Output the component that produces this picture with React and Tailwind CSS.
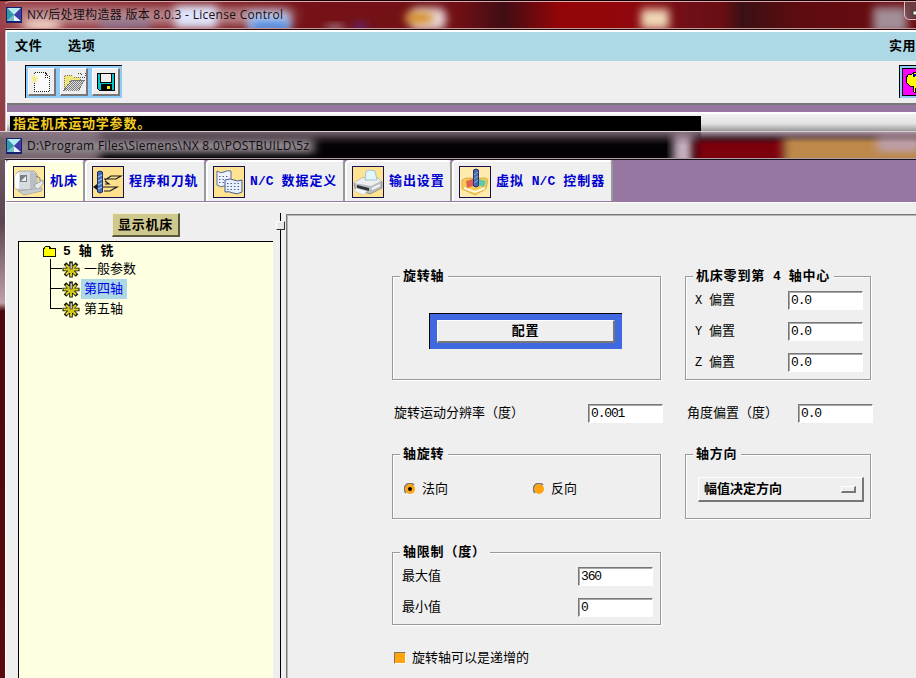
import React from "react";

const MONO = "font-['Liberation_Mono','Noto_Sans_CJK_SC',monospace]";
const UI = "font-['Open_Sans','Noto_Sans_CJK_SC',sans-serif]";

function AppIcon() {
  return (
    <svg width="16" height="16" viewBox="0 0 16 16" className="shrink-0">
      <rect width="16" height="16" fill="#15206e" />
      <rect x="1" y="1" width="14" height="13" fill="#4c5fc4" />
      <path d="M1 1 L15 1 L8 8 Z" fill="#b4ecf2" />
      <path d="M1 1 L8 8 L1 14 Z" fill="#2f9aa5" />
      <path d="M8 8 L15 14 L1 14 Z" fill="#e9f6ff" />
      <path d="M1 14 L8 8 L8 14 Z" fill="#78b9ce" />
      <path d="M15 1 L15 14 L8 8 Z" fill="#413ca4" />
    </svg>
  );
}

function TopGlass() {
  return (
    <svg width="916" height="32" viewBox="0 0 916 32" className="absolute left-0 top-0">
      <defs>
        <filter id="ga" x="-30%" y="-60%" width="160%" height="220%"><feGaussianBlur stdDeviation="4" /></filter>
        <filter id="gb" x="-30%" y="-60%" width="160%" height="220%"><feGaussianBlur stdDeviation="9 4" /></filter>
        <linearGradient id="base">
          <stop offset="0" stopColor="#9b3f48" />
          <stop offset=".3" stopColor="#761318" />
          <stop offset=".5" stopColor="#711015" />
          <stop offset=".55" stopColor="#410d14" />
          <stop offset=".61" stopColor="#930508" />
          <stop offset=".68" stopColor="#92070c" />
          <stop offset=".75" stopColor="#710f18" />
          <stop offset=".79" stopColor="#690e13" />
          <stop offset=".81" stopColor="#3a1014" />
          <stop offset=".87" stopColor="#5d0c10" />
          <stop offset="1" stopColor="#6c0c10" />
        </linearGradient>
      </defs>
      <rect width="916" height="32" fill="url(#base)" />
      <rect x="15" y="7" width="275" height="18" fill="#c09296" opacity=".85" filter="url(#gb)" />
      <ellipse cx="42" cy="25" rx="20" ry="6" fill="#f5d8c8" filter="url(#ga)" />
      <rect x="100" y="20" width="50" height="9" fill="#8186ad" opacity=".7" filter="url(#ga)" />
      <rect x="175" y="6" width="42" height="22" fill="#dfe4fa" filter="url(#ga)" />
      <rect x="248" y="12" width="42" height="20" fill="#b2cbf5" filter="url(#ga)" />
      <rect x="252" y="22" width="36" height="9" fill="#427bd7" filter="url(#ga)" />
      <ellipse cx="335" cy="28" rx="10" ry="3" fill="#a994a4" filter="url(#ga)" />
      <ellipse cx="360" cy="27" rx="9" ry="4" fill="#622874" filter="url(#ga)" />
      <rect x="410" y="8" width="36" height="22" rx="8" fill="#ead7da" filter="url(#ga)" />
      <ellipse cx="419" cy="18" rx="15" ry="6" fill="#d48c22" filter="url(#ga)" />
      <rect x="641" y="9" width="28" height="20" fill="#f0d6b6" filter="url(#ga)" />
      <rect x="873" y="7" width="34" height="26" fill="#a28e98" filter="url(#ga)" />
      <path d="M5 3.5 Q8 1.5 12 1.5 H916" stroke="#d9a8ab" fill="none" />
      <path d="M0 0 H916" stroke="#170003" strokeWidth="2" />
      <path d="M5 28.5 H916" stroke="#c4989b" />
      <path d="M5 29.5 H916" stroke="#260b0d" />
      <path d="M904.5 2 V14 Q904.5 19.5 910 19.5 H916" stroke="#d7c5ca" fill="none" />
      <path d="M905.5 2 V13 Q905.5 18.5 911 18.5 H916 V2 Z" fill="#6c5053" opacity=".7" />
      <rect x="913" y="11" width="6" height="4" fill="#fff" stroke="#443" />
    </svg>
  );
}

function SecondGlass() {
  return (
    <svg width="916" height="29" viewBox="0 0 916 29" className="absolute left-0 top-0">
      <defs>
        <filter id="gc" x="-30%" y="-60%" width="160%" height="220%"><feGaussianBlur stdDeviation="5 3" /></filter>
        <linearGradient id="sheen" x1="0" x2="0" y1="0" y2="1">
          <stop offset="0" stopColor="#bda6b4" />
          <stop offset=".25" stopColor="#907688" stopOpacity=".75" />
          <stop offset=".65" stopColor="#4a3844" stopOpacity="0" />
        </linearGradient>
      </defs>
      <rect width="916" height="29" fill="#040204" />
      <rect x="-10" y="0" width="110" height="40" fill="#75636c" filter="url(#gc)" />
      <rect x="10" y="7" width="304" height="15" fill="#8c848a" filter="url(#gc)" />
      <rect x="673" y="3" width="20" height="30" fill="#c8b0c1" filter="url(#gc)" />
      <rect x="695" y="8" width="92" height="26" fill="#7d060e" filter="url(#gc)" />
      <rect x="783" y="5" width="150" height="28" fill="#bd8848" filter="url(#gc)" />
      <rect x="877" y="3" width="44" height="18" fill="#bd9da5" filter="url(#gc)" />
      <rect width="701" height="22" fill="url(#sheen)" opacity=".65" />
      <rect x="701" width="215" height="18" fill="url(#sheen)" />
      <path d="M0 .5 H916" stroke="#d8ccd2" />
      <path d="M5 27.5 H916" stroke="#b39fa9" />
      <path d="M5 28.5 H916" stroke="#171017" />
    </svg>
  );
}

function NewIcon() {
  return (
    <svg width="22" height="24" viewBox="0 0 22 24" shapeRendering="crispEdges">
      <path d="M3.500 2.500 H14 L18.500 7 V21.500 H3.500 Z" fill="#fafafa" stroke="#222" strokeDasharray="1 1" />
      <path d="M14.500 3 V7.500 H18" fill="none" stroke="#222" strokeDasharray="1 1" />
      <path d="M0 8.500 H7 M3.500 5 V13 M1 6 L6 12 M6 6 L1 12" stroke="#f3ea72" />
    </svg>
  );
}
function OpenIcon() {
  return (
    <svg width="24" height="24" viewBox="0 0 24 24" shapeRendering="crispEdges">
      <defs>
        <pattern id="dither" width="2" height="2" patternUnits="userSpaceOnUse">
          <rect width="2" height="2" fill="#e0e0e0" />
          <rect width="1" height="1" fill="#777" /><rect x="1" y="1" width="1" height="1" fill="#777" />
        </pattern>
      </defs>
      <path d="M2 7 L4 5 H9 L11 7 H18 V19 H2 Z" fill="#f0e77c" stroke="#777" strokeDasharray="1 1" />
      <path d="M2 20 L9 10 H23 L17 20 Z" fill="url(#dither)" stroke="#777" strokeDasharray="1 1" />
      <path d="M16 3 L18 3 L21 6 M23 3 V7 H19" fill="none" stroke="#444" strokeDasharray="1 1" />
    </svg>
  );
}
function SaveIcon() {
  return (
    <svg width="18" height="18" viewBox="0 0 18 18" shapeRendering="crispEdges">
      <path d="M0 0 H18 V18 H2 L0 16 Z" fill="#000" />
      <path d="M1 1 H17 V17 H2 L1 16 Z" fill="#08c5cb" />
      <rect x="3" y="0" width="12" height="10" fill="#000" />
      <rect x="4" y="1" width="10" height="8" fill="#efefef" />
      <rect x="4" y="11" width="11" height="7" fill="#000" />
      <rect x="10" y="13" width="3" height="3" fill="#e8f000" />
    </svg>
  );
}
function ToolButton({ children }) {
  return (
    <div className="flex size-7 items-center justify-center border-t border-r-2 border-b-2 border-l border-t-white border-l-white border-r-[#777] border-b-[#777] bg-[#efefef]">
      {children}
    </div>
  );
}

const MachineIcon = () => (
  <svg width="30" height="30" viewBox="0 0 30 30">
    <rect width="30" height="30" fill="#ffe89a" />
    <path d="M1 8 L5 4 H20 L23 7 V20 L20 23 H4 L1 21 Z" fill="#d8dcdf" stroke="#8c9298" strokeWidth=".7" />
    <path d="M1 8 L5 5 V22 L1 21 Z" fill="#fff" />
    <path d="M16 5 L22 6 V20 L16 23 Z" fill="#bbbfc3" />
    <rect x="6" y="8" width="7" height="7" fill="#777e84" /><path d="M7 14 L12 9 V14 Z" fill="#edf1f2" />
    <path d="M20 18 L29 13 V17 L23 24 Z" fill="#e8ebed" stroke="#7f858b" strokeWidth=".7" />
    <path d="M4 24 L28 21 V24 L10 28 Z" fill="#c9cdd0" stroke="#92979d" strokeWidth=".6" />
    <path d="M22 9 L26 11 V14" stroke="#777" fill="none" />
  </svg>
);
const ToolpathIcon = () => (
  <svg width="30" height="30" viewBox="0 0 30 30">
    <rect width="30" height="30" fill="#ffe08c" />
    <path d="M4.500 5 Q7 3 9.500 5 V25 Q7 27 4.500 25 Z" fill="#426abd" stroke="#1f2e65" />
    <path d="M5 10 L9 8 M5 14 L9 12 M5 18 L9 16 M5 22 L9 20" stroke="#9bc4ef" strokeWidth="1.200" />
    <path d="M11 12 H23 L28 9 H18 L12 13 M1 20 H5 M10 20 H24 L17 24 H11 M12 14 L16 17 H12" stroke="#171a20" strokeWidth="1.200" fill="none" />
    <path d="M0 20 L4 17 V23 Z" fill="#14171c" />
  </svg>
);
const DataIcon = () => (
  <svg width="30" height="30" viewBox="0 0 30 30">
    <rect width="30" height="30" fill="#ffe391" />
    <path d="M3 4 Q7 7 10 5 T17 4 V19 Q13 17 10 19 T3 18 Z" fill="#edf3ff" stroke="#576da0" />
    <path d="M11 13 Q17 11 20 13 T28 13 V25 Q23 28 19 26 T11 25 Z" fill="#e8effc" stroke="#455c93" />
    <path d="M5 9.500 H14 M5 12.500 H10 M5 15.500 H10 M13 16.500 H26 M13 19.500 H26 M13 22.500 H26" stroke="#4b6398" strokeDasharray="1.500 2" />
  </svg>
);
const PrinterIcon = () => (
  <svg width="30" height="30" viewBox="0 0 30 30">
    <rect width="30" height="30" fill="#ffe391" />
    <path d="M1 16 L9 11 L25 11 L29 15 V21 L17 27 L2 22 Z" fill="#b9bdc2" stroke="#6b7176" strokeWidth=".6" />
    <path d="M1 16 L9 11 H25 L28 14 L18 19 Z" fill="#eceef0" />
    <path d="M12 13 L13 4 Q17 2 22 4 L24 13 Z" fill="#e2f6fd" stroke="#8cb1c1" strokeWidth=".7" />
    <path d="M4 18 L16 21 V24 L4 21 Z" fill="#2d3337" />
    <path d="M3 21 L14 24 L11 28 L1 24 Z" fill="#f5f7f8" stroke="#aaa" strokeWidth=".4" />
    <path d="M19 22 L27 18" stroke="#f3f4f4" strokeWidth="2" />
  </svg>
);
const ControllerIcon = () => (
  <svg width="30" height="30" viewBox="0 0 30 30">
    <rect width="30" height="30" fill="#ffebae" />
    <path d="M2 13 L6 11 H26 L28 13 L26 22 L15 28 L2 22 Z" fill="#f5cc55" stroke="#c89629" strokeWidth=".6" />
    <path d="M6 14 L13 12 V19 L7 21 Z" fill="#e35f50" />
    <path d="M18 12 L26 14 L24 20 L18 18 Z" fill="#5fc7ae" />
    <path d="M4 21 L15 25 L25 21" stroke="#fff7df" strokeWidth="2" fill="none" />
    <path d="M13.500 3 Q16 1 18.500 3 V19 Q16 21 13.500 19 Z" fill="#4966b4" stroke="#25386e" />
    <path d="M14 8 L18 5 M14 12 L18 9 M14 16 L18 13" stroke="#8db2df" />
  </svg>
);

function Tab({ icon, children, width, active }) {
  return (
    <div className={`flex h-[41px] shrink-0 items-center rounded-t-[4px] border-t-2 border-t-white border-l-2 border-l-white border-r-2 border-r-[#999] pl-[5px] ${active ? "bg-[#ffffe2]" : "bg-[#efefef]"} ${width}`}>
      <div className="mr-[5px] size-8 shrink-0 border border-[#15124b]">{icon}</div>
      <div className={`pt-px text-[13px] font-bold tracking-[0.9px] whitespace-pre text-[#0000ce] ${MONO}`}>{children}</div>
    </div>
  );
}

const L = ({ children }) => <span className="tracking-[0.1px]">{children}</span>;

function Gear() {
  return (
    <svg width="18" height="17" viewBox="0 0 18 17" className="shrink-0">
      <path d="M9 0.500 V16.500 M0.500 8.500 H17.500 M3 2.500 L15 14.500 M15 2.500 L3 14.500" stroke="#151500" strokeWidth="3.600" />
      <path d="M9 2 V15.500 M1.500 8.500 H16.500 M4 4 L14 13.500 M14 4 L4 13.500" stroke="#ddd324" strokeWidth="1.900" />
      <circle cx="9" cy="8.500" r="3.500" fill="#d5ca1c" />
      <rect x="8" y="2" width="2.500" height="6" fill="#bbb" stroke="#222" strokeWidth=".6" />
    </svg>
  );
}

function TreeItem({ children, selected, last }) {
  return (
    <div className="flex h-5 items-center">
      <svg width="12" height="20" className="shrink-0" shapeRendering="crispEdges">
        <path d={last ? "M.5 0 V9.500 H12" : "M.5 0 V20 M.5 9.500 H12"} stroke="#000" fill="none" />
      </svg>
      <Gear />
      <span className={`ml-px flex h-5 items-center pt-[2px] pr-[4px] pl-[3px] text-[13px] ${selected ? "bg-[#add8e6] text-[#0000e8]" : "text-black"}`}>{children}</span>
    </div>
  );
}

function Group({ title, className, children }) {
  return (
    <section className={`flex flex-col border border-[#999] shadow-[1px_1px_0_#fff,inset_1px_1px_0_#fff] ${className}`}>
      <h2 className="-mt-[11px] ml-[7px] h-[21px] self-start bg-[#efefef] pr-[4px] pl-[3px] text-[13px] leading-[22px] font-bold tracking-[0.8px] whitespace-pre">{title}</h2>
      {children}
    </section>
  );
}

function Field({ value }) {
  return (
    <div className="flex h-[19px] w-[75px] shrink-0 items-center border border-t-[#777] border-r-white border-b-white border-l-[#777] bg-white pl-[2px] text-[13px] tracking-[-1.15px] shadow-[inset_1px_1px_0_#a8a8a8]">
      {value}
    </div>
  );
}

function Radio({ checked }) {
  return (
    <svg width="12" height="12" viewBox="0 0 12 12">
      <circle cx="6" cy="6" r="5" fill="#ffa510" />
      <path d="M2 10 A5 5 0 0 1 10 2" fill="none" stroke="#807567" strokeWidth="1.500" />
      {checked && <circle cx="6" cy="6" r="2" fill="#000" />}
    </svg>
  );
}

function MainWindow() {
  return (
    <div className="absolute top-0 left-0 h-[132px] w-[916px] overflow-hidden bg-[#903f46]">
      <TopGlass />
      <header className={`relative flex h-[30px] items-center gap-[5px] pl-[6px] text-[12px] text-[#170f12] ${UI}`}>
        <AppIcon />
        <span className="tracking-[0.29px] whitespace-pre">NX/后处理构造器 版本 8.0.3 - License Control</span>
      </header>
      <div className="relative ml-[5px] border-l border-[#d9bfc1]">
        <div className="h-[104px] border-t-2 border-l border-white bg-[#efefef]">
          <nav className="flex h-[29px] items-center bg-[#add8e6] pt-px pl-[8px] text-[13px] font-bold tracking-[0.8px]">
            <span className="w-[53px]">文件</span>
            <span>选项</span>
            <span className="ml-auto tracking-[0.5px]">实用</span>
          </nav>
          <div className="flex h-[44px] justify-between border-b-2 border-[#777] pt-1 pl-[18px]">
            <div className="flex h-[33px] w-[97px] gap-1 border-t border-l border-black bg-[#8fcdf8] pt-[2px] pl-[2px]">
              <ToolButton><NewIcon /></ToolButton>
              <ToolButton><OpenIcon /></ToolButton>
              <ToolButton><SaveIcon /></ToolButton>
            </div>
            <div className="h-[33px] w-[17px] overflow-hidden border-t border-l border-black bg-[#8fcdf8] pt-[2px] pl-[2px]">
              <svg width="28" height="28" viewBox="0 0 28 28" shapeRendering="crispEdges">
                <rect width="28" height="28" fill="#000" /><rect x="1" y="1" width="27" height="26" fill="#f0f" />
                <path d="M4 10 L7 6 H10 L13 4 H22 V20 H13 V24 H12 L11 18 H8 L4 14 Z" fill="#ff0" stroke="#000" />
                <path d="M12 9 V7 H15" stroke="#0000bd" strokeWidth="2" fill="none" />
              </svg>
            </div>
          </div>
          <div className="h-[7px] bg-[#9776a2]" />
          <div className="h-[21px] border-t-2 border-white bg-linear-to-b from-[#f2f2f2] via-[#e3e3e3] to-[#888] pt-[2px] pl-[3px]">
            <div className="flex h-[17px] w-[691px] items-center bg-black pl-[3px] text-[13px] font-bold tracking-[0.8px] text-[#f2cc24]">指定机床运动学参数。</div>
          </div>
        </div>
      </div>
    </div>
  );
}

function TreePane() {
  return (
    <aside className="flex w-[274px] shrink-0 flex-col pt-[10px]">
      <button className="ml-[106px] flex h-6 w-[68px] items-center justify-center border border-t-[#f1edcf] border-r-2 border-b-2 border-l-[#f1edcf] border-r-[#5b573f] border-b-[#5b573f] bg-[#d0c98e] pt-[2px] text-[13px] font-bold tracking-[0.8px]">显示机床</button>
      <div className="mt-[4px] mr-[7px] ml-[12px] flex-1 border-t border-l border-black bg-[#ffffe1] pl-[24px]">
        <div className="flex h-[18px] items-center pt-px text-[13px] font-bold tracking-[0.8px] whitespace-pre">
          <svg width="14" height="12" viewBox="0 0 14 12" className="mr-[6px]" shapeRendering="crispEdges">
            <path d="M0 2 L2 0 H6 L8 2 H13 V11 H0 Z" fill="#111" /><path d="M1 3 H12 V10 H1 Z M2 1 H6 V3 H2 Z" fill="#ffff00" />
          </svg>
          <span className="pt-px"><L>5 </L>轴<L> </L>铣</span>
        </div>
        <div className="-mt-px pl-[7px]">
          <TreeItem>一般参数</TreeItem>
          <TreeItem selected>第四轴</TreeItem>
          <TreeItem last>第五轴</TreeItem>
        </div>
      </div>
    </aside>
  );
}

function SettingsPane() {
  return (
    <main className="flex flex-1 flex-col border-t border-l border-[#777] bg-[#efefef] pt-[61px] pl-[105px] text-[13px] shadow-[inset_1px_1px_0_#b8b8b8]">
      <div className="flex gap-6">
        <Group title="旋转轴" className="h-[104px] w-[269px]">
          <div className="mt-[26px] ml-[36px] h-[36px] w-[193px] border-t border-l border-black bg-[#4068e0] px-[7px] py-[6px]">
            <button className="flex h-[23px] w-full items-center justify-center border-t border-r-2 border-b-2 border-l border-t-white border-r-[#777] border-b-[#777] border-l-white bg-[#efefef] pt-[2px] font-bold tracking-[0.8px]">配置</button>
          </div>
        </Group>
        <Group title={<>机床零到第<L> 4 </L>轴中心</>} className="h-[104px] w-[186px]">
          <div className="mt-[4px] flex flex-col gap-[12px] pl-[9px]">
            {["X", "Y", "Z"].map((axis) => (
              <div key={axis} className="flex h-[19px] items-center">
                <span className="w-[93px] pt-px whitespace-pre"><span className="inline-block w-[14px] text-[12px]">{axis}</span>偏置</span>
                <Field value="0.0" />
              </div>
            ))}
          </div>
        </Group>
      </div>
      <div className="mt-[24px] flex h-[19px] items-center">
        <span className="w-[196px] pt-px pl-[2px]">旋转运动分辨率（度）</span>
        <Field value="0.001" />
        <span className="ml-[24px] w-[111px] pt-px">角度偏置（度）</span>
        <Field value="0.0" />
      </div>
      <div className="mt-[31px] flex gap-6">
        <Group title="轴旋转" className="h-[65px] w-[269px]">
          <div className="mt-[14px] flex h-5 items-center pl-[11px]">
            <Radio checked /><span className="ml-[6px] w-[111px] pt-[2px]">法向</span>
            <Radio /><span className="ml-[6px] pt-[2px]">反向</span>
          </div>
        </Group>
        <Group title="轴方向" className="h-[65px] w-[186px]">
          <div className="mt-[12px] ml-[12px] flex h-[25px] w-[166px] items-center justify-between border-t border-r-2 border-b-2 border-l border-t-white border-r-[#777] border-b-[#777] border-l-white pr-[6px] pl-[5px] font-bold">
            <span className="pt-[2px]">幅值决定方向</span>
            <span className="h-[7px] w-[15px] border-t border-r-2 border-b-2 border-l border-t-white border-r-[#777] border-b-[#777] border-l-white" />
          </div>
        </Group>
      </div>
      <Group title="轴限制（度）" className="mt-[33px] h-[73px] w-[269px]">
        <div className="mt-[4px] flex flex-col gap-[12px] pl-[9px]">
          <div className="flex h-[19px] items-center"><span className="w-[176px] pt-px">最大值</span><Field value="360" /></div>
          <div className="flex h-[19px] items-center"><span className="w-[176px] pt-px">最小值</span><Field value="0" /></div>
        </div>
      </Group>
      <div className="mt-[23px] flex h-5 items-center pl-[2px]">
        <span className="mr-[6px] size-[12px] border-t border-r border-b border-l border-t-[#807567] border-r-white border-b-white border-l-[#807567] bg-[#ffa510]" />
        <span className="pt-[2px]">旋转轴可以是递增的</span>
      </div>
    </main>
  );
}

function PostWindow() {
  return (
    <div className="absolute top-[131px] left-0 flex h-[547px] w-[916px] flex-col bg-[linear-gradient(#75636c_0px,#5c4450_90px,#c0a0a8_172px,#4b080c_180px,#5a0a0e_547px)]">
      <SecondGlass />
      <header className={`relative flex h-[29px] shrink-0 items-center gap-[5px] pl-[6px] text-[12px] text-[#100c10] ${UI}`}>
        <AppIcon />
        <span className="tracking-[0.27px]">D:\Program Files\Siemens\NX 8.0\POSTBUILD\5z</span>
      </header>
      <div className="relative ml-[5px] flex flex-1 flex-col border-l border-white bg-[#efefef]">
        <div className="flex h-[42px] bg-[#9776a2]">
          <Tab active width="w-[79px]" icon={<MachineIcon />}>机床</Tab>
          <Tab width="w-[121px]" icon={<ToolpathIcon />}>程序和刀轨</Tab>
          <Tab width="w-[139px]" icon={<DataIcon />}><L>N/C </L>数据定义</Tab>
          <Tab width="w-[107px]" icon={<PrinterIcon />}>输出设置</Tab>
          <Tab width="w-[161px]" icon={<ControllerIcon />}>虚拟<L> N/C </L>控制器</Tab>
        </div>
        <div className="flex flex-1 border-t border-white">
          <TreePane />
          <div className="flex w-[6px] flex-col pt-[10px]">
            <div className="relative h-full w-px bg-black">
              <span className="absolute top-[8px] left-[-4px] size-[9px] border border-t-white border-r-[#333] border-b-[#333] border-l-white bg-[#e9e9e9]" />
            </div>
          </div>
          <div className="flex flex-1 pt-[11px]"><SettingsPane /></div>
        </div>
      </div>
    </div>
  );
}

export default function App() {
  return (
    <div className={`relative h-[678px] w-[916px] overflow-hidden bg-[#400] text-black ${MONO}`}>
      <MainWindow />
      <PostWindow />
    </div>
  );
}
